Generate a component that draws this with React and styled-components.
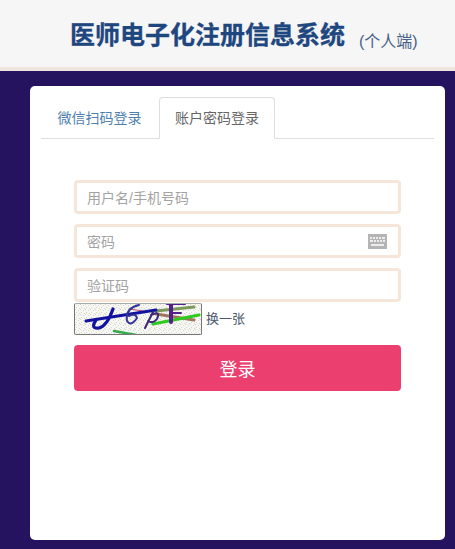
import React from "react";
import styled, { createGlobalStyle } from "styled-components";

const Global = createGlobalStyle`
  html, body { margin: 0; padding: 0; height: 100%; overflow: hidden; }
  body { background: #25135f; font-family: "Liberation Sans", "Noto Sans CJK SC", sans-serif; }
  * { box-sizing: border-box; }
`;
const Page = styled.div`width: 455px; height: 549px; display: flex; flex-direction: column; overflow: hidden;`;
const Header = styled.header`
  height: 71px; flex: none; background: #f6f6f7; border-bottom: 4px solid #f0e4df;
  display: flex; align-items: flex-start; padding: 19px 0 0 70px;
`;
const Title = styled.h1`margin: 0; font-size: 25px; line-height: 32px; font-weight: 700; color: #1f477f; white-space: nowrap; -webkit-text-stroke: 0.3px #1f477f;`;
const Sub = styled.span`margin: 13px 0 0 14px; font-size: 16px; line-height: 20px; color: #465f86; white-space: nowrap;`;
const Main = styled.main`flex: 1; padding: 15px 10px 9px 30px;`;
const Card = styled.section`height: 454px; width: 415px; background: #fff; border-radius: 5px; padding: 11px 11px 0;`;
const Tabs = styled.nav`display: flex; height: 42px; border-bottom: 1px solid #ddd; padding-left: 1px;`;
const Tab = styled.div`
  width: ${p => p.$active ? "116px" : "117px"}; height: 42px; display: flex; align-items: center; justify-content: center;
  font-size: 14px; padding: 0 ${p => p.$active ? "0" : "2px"} 3px 0;
  color: ${p => p.$active ? "#666" : "#4f80ad"};
  background: ${p => p.$active ? "#fff" : "transparent"};
  border: ${p => p.$active ? "1px solid #ddd" : "1px solid transparent"};
  border-bottom-color: ${p => p.$active ? "#fff" : "transparent"};
  border-radius: 4px 4px 0 0;
`;
const Form = styled.form`display: flex; flex-direction: column; margin: 41px 33px 0 33px; width: 327px;`;
const Field = styled.div`position: relative; height: 34px; margin-bottom: 10px;`;
const Input = styled.input`
  width: 100%; height: 100%; padding: 2px 10px 0; border: 3px solid #f6e6d9; border-radius: 4px; outline: none;
  font: 14px "Liberation Sans", "Noto Sans CJK SC", sans-serif; color: #555; background: #fff;
  &::placeholder { color: #a3a3a3; opacity: 1; }
`;
const KeyboardIcon = styled.svg`position: absolute; right: 14px; top: 10px; width: 19px; height: 15px;`;
const CaptchaRow = styled.div`display: flex; align-items: center; margin-top: -9px; height: 32px;`;
const Captcha = styled.svg`width: 128px; height: 32px; flex: none; border: 1px solid #777; border-top-color: #aaa; border-radius: 2px; background: #f6f6f2;`;
const Change = styled.a`margin: 0 0 3px 4px; font-size: 13px; color: #4a586a;`;
const Submit = styled.button`
  margin-top: 10px; height: 46px; border: 0; border-radius: 4px; background: #eb3f70; color: #fff; padding: 0 0 1px;
  font: 18px "Liberation Sans", "Noto Sans CJK SC", sans-serif;
`;

export default function App() {
  return (
    <Page>
      <Global />
      <Header>
        <Title>医师电子化注册信息系统</Title>
        <Sub>(个人端)</Sub>
      </Header>
      <Main>
        <Card>
          <Tabs>
            <Tab>微信扫码登录</Tab>
            <Tab $active>账户密码登录</Tab>
          </Tabs>
          <Form onSubmit={e => e.preventDefault()}>
            <Field><Input placeholder="用户名/手机号码" /></Field>
            <Field>
              <Input placeholder="密码" />
              <KeyboardIcon viewBox="0 0 19 15">
                <rect width="19" height="15" fill="#b4b4b4" />
                <path d="M2 3h2v2H2zM5 3h2v2H5zM8 3h2v2H8zM11 3h2v2h-2zM14 3h3v2h-3zM2 6h3v2H2zM6 6h2v2H6zM9 6h2v2H9zM12 6h2v2h-2zM15 6h2v2h-2zM3 10h13v2H3z" fill="#ececec" />
              </KeyboardIcon>
            </Field>
            <Field><Input placeholder="验证码" /></Field>
            <CaptchaRow>
              <Captcha viewBox="0 0 126 30" aria-label="captcha">
                <defs>
                  <pattern id="noise" width="5" height="5" patternUnits="userSpaceOnUse">
                    <path d="M0 0h1v1H0zM3 1h1v1H3zM1 3h1v1H1zM4 4h1v1H4z" fill="#d6d6ce" />
                  </pattern>
                </defs>
                <rect width="126" height="30" fill="url(#noise)" />
                <g fill="none" strokeLinecap="round">
                  <path d="M81 7 L119 3" stroke="#7d9a5e" strokeWidth="3" />
                  <path d="M81 10 L119 16" stroke="#a0775c" strokeWidth="3" />
                  <path d="M78 20 L124 11" stroke="#2ecb1e" strokeWidth="3" />
                  <path d="M39 27 L61 31" stroke="#2fae4a" strokeWidth="2.5" />
                  <path d="M54 5 L68 7" stroke="#c0506a" strokeWidth="1" />
                  <path d="M11 17 L81 6" stroke="#1212a0" strokeWidth="3" />
                  <path d="M38 5 Q32 22 24 24 Q15 25 21 16" stroke="#1212a0" strokeWidth="3.2" />
                  <path d="M64 1 Q50 4 52 17 Q56 23 62 14 Q61 9 54 12" stroke="#34349a" strokeWidth="2" />
                  <path d="M78 8 L70 24 M76 11 Q86 6 82 15 Q78 20 73 17" stroke="#3a2a78" strokeWidth="2" />
                  <path d="M96 -1 V18" stroke="#54218c" strokeWidth="4" />
                  <path d="M92 0 H110 M96 9 H106" stroke="#54218c" strokeWidth="2" />
                </g>
              </Captcha>
              <Change>换一张</Change>
            </CaptchaRow>
            <Submit>登录</Submit>
          </Form>
        </Card>
      </Main>
    </Page>
  );
}
